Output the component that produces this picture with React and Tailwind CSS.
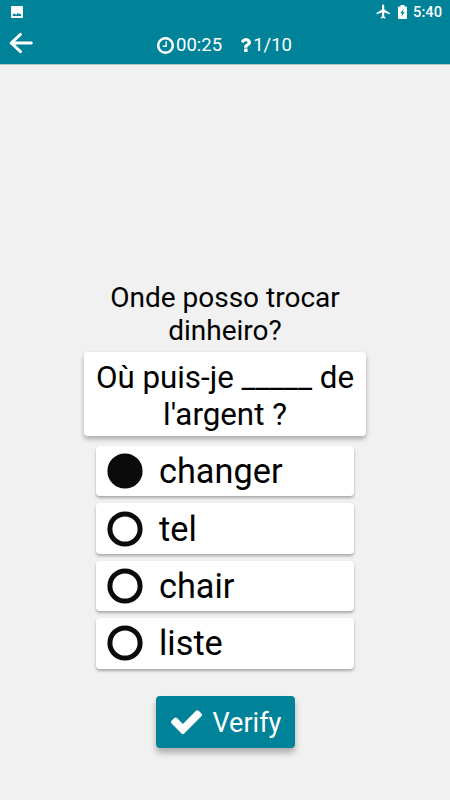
const options = [
  { label: 'changer', selected: true },
  { label: 'tel', selected: false },
  { label: 'chair', selected: false },
  { label: 'liste', selected: false }
];

const ImageIcon = () => (
  <svg className="size-3" viewBox="0 0 12 12">
    <rect width="12" height="12" rx="1" fill="#fff" />
    <path d="M1.800 10V8.200L3.600 7.600 5.200 9 6.800 6.800 8 8.200 9 7.400 10.200 8.800V10z" fill="#008299" />
  </svg>
);

const AirplaneIcon = () => (
  <svg className="size-[17px]" viewBox="0 0 24 24" fill="#fff">
    <path d="M21 16v-2l-8-5V3.500c0-.83-.67-1.500-1.500-1.500S10 2.670 10 3.500V9l-8 5v2l8-2.500V19l-2 1.500V22l3.500-1 3.500 1v-1.500L13 19v-5.500l8 2.500z" />
  </svg>
);

const BatteryIcon = () => (
  <svg className="h-[14px] w-[9px]" viewBox="0 0 9 14">
    <path d="M2.500 0h4v1.400H8.200a.8.800 0 0 1 .8.800V13.200a.8.800 0 0 1-.8.800H.8a.8.800 0 0 1-.8-.8V2.200a.8.800 0 0 1 .8-.8H2.500z" fill="#fff" />
    <path d="M5.600 4 2.300 8.200H4L3.400 11.500 6.700 7.200H5z" fill="#008299" />
  </svg>
);

const BackIcon = () => (
  <svg className="h-[22px] w-6" viewBox="0 0 24 22" fill="none" stroke="#fff" strokeWidth="3" strokeLinecap="round" strokeLinejoin="round">
    <path d="M11.500 2.400 2.200 11l9.300 8.700M3 11h19.300" />
  </svg>
);

const ClockIcon = () => (
  <svg className="size-[17px]" viewBox="0 128 1536 1536" fill="#fff">
    <path d="M896 544v448q0 14-9 23t-23 9h-320q-14 0-23-9t-9-23v-64q0-14 9-23t23-9h224v-352q0-14 9-23t23-9h64q14 0 23 9t9 23zm416 352q0-148-73-273t-198-198-273-73-273 73-198 198-73 273 73 273 198 198 273 73 273-73 198-198 73-273zm224 0q0 209-103 385.500t-279.500 279.500-385.500 103-385.500-103-279.500-279.500-103-385.500 103-385.500 279.500-279.500 385.500-103 385.500 103 279.500 279.500 103 385.500z" />
  </svg>
);

const QuestionIcon = () => (
  <svg className="h-[14px] w-[10px]" viewBox="96 256 924 1280" fill="#fff">
    <path d="M704 1256v240q0 16-12 28t-28 12h-240q-16 0-28-12t-12-28v-240q0-16 12-28t28-12h240q16 0 28 12t12 28zm316-600q0 54-15.500 101t-35 76.500-55 59.500-57.500 43.500-61 35.500q-41 23-68.500 65t-27.500 67q0 17-12 32.500t-28 15.500h-240q-15 0-25.500-18.500t-10.500-37.500v-45q0-83 65-156.500t143-108.500q59-27 84-56t25-76q0-42-46.500-74t-107.500-32q-65 0-108 29-35 25-107 115-13 16-31 16-12 0-25-8l-164-125q-13-10-15.500-25t5.500-28q160-266 464-266 80 0 161 31t146 83 106 127.500 41 158.500z" />
  </svg>
);

const CheckIcon = () => (
  <svg className="h-[25px] w-[31px]" viewBox="121 270 1550 1252" fill="#fff">
    <path d="M1671 566q0 40-28 68l-724 724-136 136q-28 28-68 28t-68-28l-136-136-362-362q-28-28-28-68t28-68l136-136q28-28 68-28t68 28l294 295 656-657q28-28 68-28t68 28l136 136q28 28 28 68z" />
  </svg>
);

const RadioIcon = ({ selected }) => (
  <svg className="size-9" viewBox="0 0 36 36" stroke="#0b0b0b" strokeWidth="5">
    <circle cx="18" cy="18" r="15.100" fill={selected ? '#0b0b0b' : 'none'} />
  </svg>
);

const StatusBar = () => (
  <div className="flex h-6 items-center pr-[8px] pl-[11px]">
    <span className="-mt-px"><ImageIcon /></span>
    <div className="ml-auto flex items-center">
      <span className="-mt-px"><AirplaneIcon /></span>
      <span className="-mt-px ml-[6px]"><BatteryIcon /></span>
      <span className="ml-[6px] text-[14.700px] leading-6 font-medium">5:40</span>
    </div>
  </div>
);

const Header = () => (
  <header className="h-[64px] shrink-0 bg-[#008299] text-white shadow-[0_1px_0_#b4c8cc]">
    <StatusBar />
    <div className="grid h-10 grid-cols-[1fr_auto_1fr] items-center">
      <button type="button" aria-label="Back" className="justify-self-start pb-[3px] pl-[9px]">
        <BackIcon />
      </button>
      <div className="flex items-center pt-px pr-px text-[18.500px] leading-10">
        <ClockIcon />
        <span className="ml-[2px]">00:25</span>
        <span className="ml-[19px]"><QuestionIcon /></span>
        <span className="ml-[2px]">1/10</span>
      </div>
    </div>
  </header>
);

const Option = ({ label, selected }) => (
  <button
    type="button"
    className="flex h-[50.400px] w-[258px] items-center rounded-[4px] bg-white pl-[11px] text-[34.300px] leading-[50.400px] shadow-[0_2px_3px_rgba(0,0,0,0.3)]"
  >
    <RadioIcon selected={selected} />
    <span className="ml-4 pt-[0.400px]">{label}</span>
  </button>
);

const App = () => (
  <div className="flex h-screen flex-col bg-[#f1f1f1] font-['Roboto',sans-serif] text-black">
    <Header />
    <main className="flex flex-col items-center pt-[218px]">
      <p className="text-center text-[28px] leading-[32.500px]">
        Onde posso trocar
        <br />
        dinheiro?
      </p>
      <div className="mt-[5px] h-[84px] w-[282px] rounded-[4px] bg-white pt-[8px] text-center text-[31.300px] leading-[36.500px] shadow-[0_3px_5px_rgba(0,0,0,0.3)]">
        Où puis-je _____ de
        <br />
        l'argent ?
      </div>
      <div className="mt-[10px] flex flex-col gap-[7px]">
        {options.map((option) => (
          <Option key={option.label} label={option.label} selected={option.selected} />
        ))}
      </div>
      <button
        type="button"
        className="mt-[27.400px] flex h-[52px] w-[139px] items-center rounded-[4px] bg-[#008299] pl-[15px] text-[27px] leading-[52px] text-white shadow-[0_5px_6px_rgba(0,0,0,0.28)]"
      >
        <CheckIcon />
        <span className="ml-[11px] pt-[2px]">Verify</span>
      </button>
    </main>
  </div>
);

export default App;
